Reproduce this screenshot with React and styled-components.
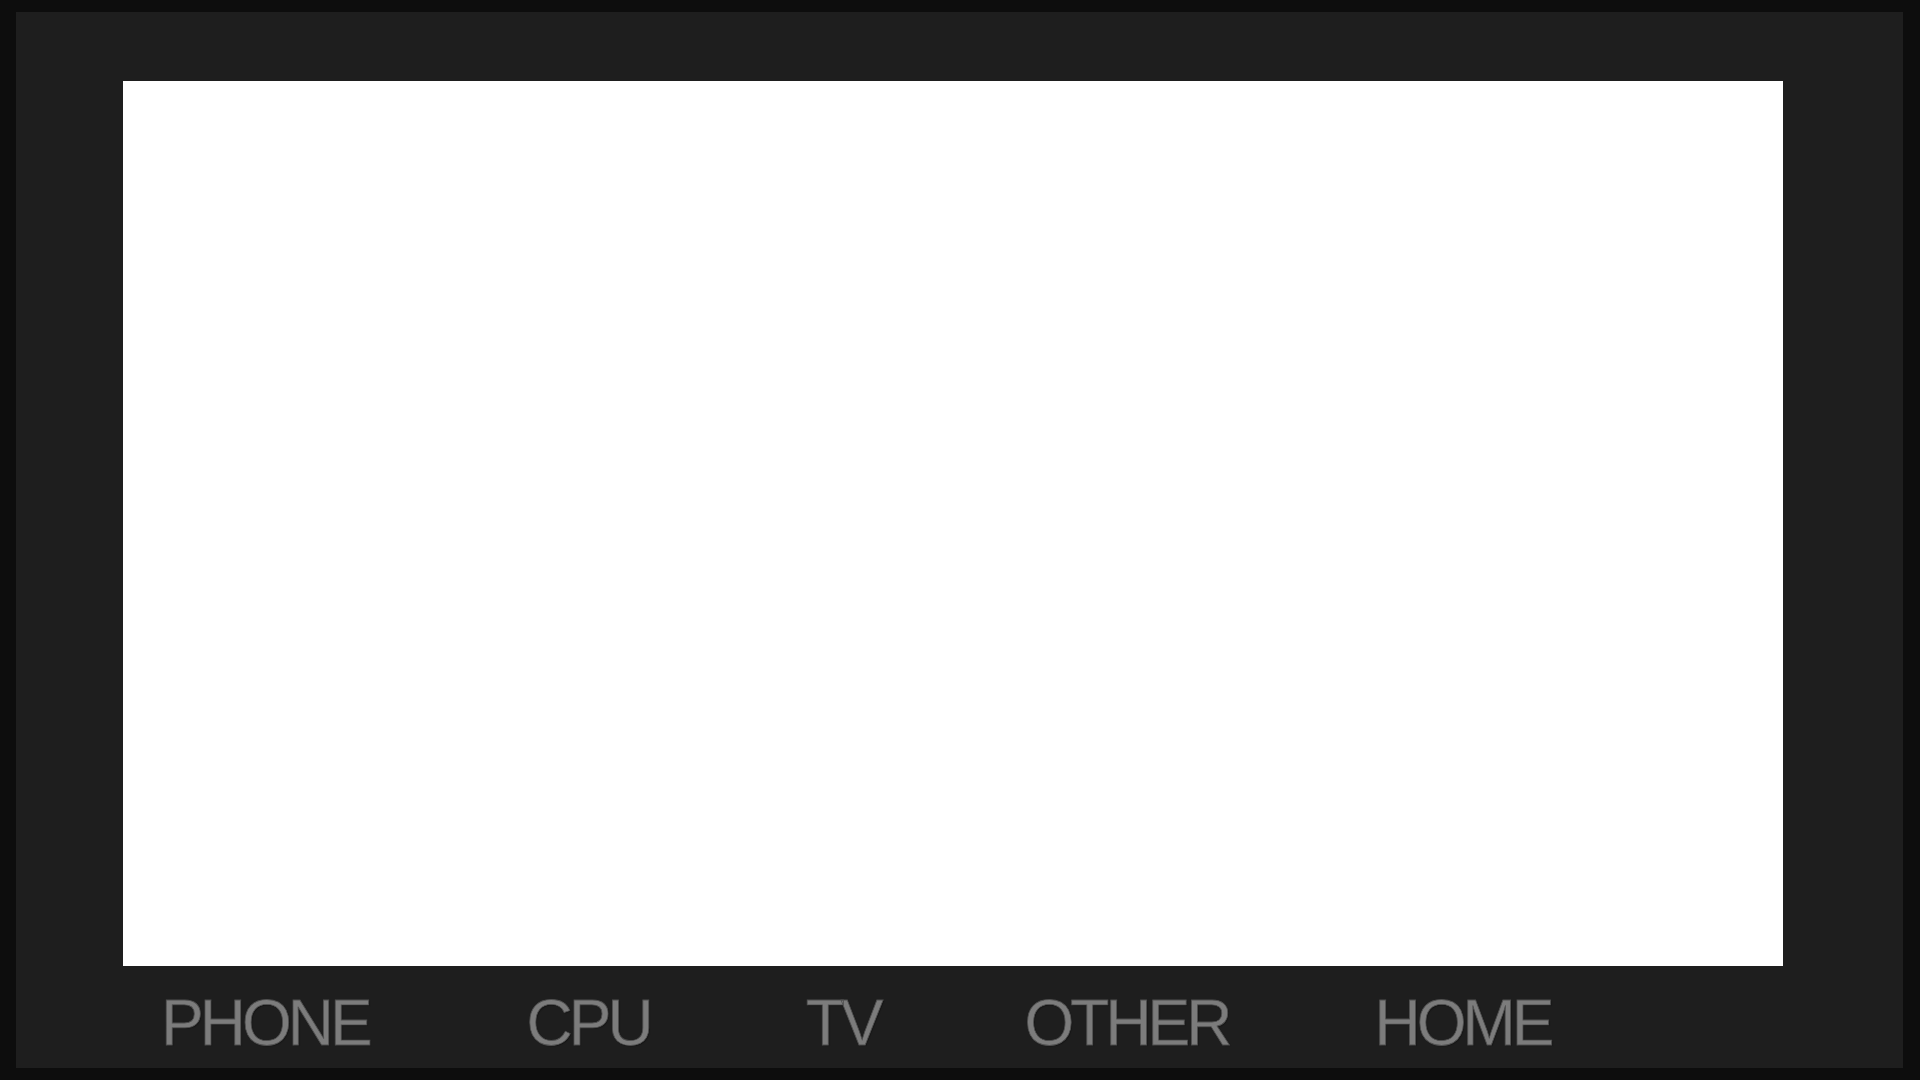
import React from "react";
import styled, { createGlobalStyle } from "styled-components";

const GlobalStyle = createGlobalStyle`
  html, body {
    margin: 0;
    padding: 0;
    background-color: #0d0d0d;
  }
  #root {
    height: 1080px;
  }
`;

const Frame = styled.div`
  box-sizing: border-box;
  height: 100%;
  padding: 12px 17px 12px 16px;
`;

const Panel = styled.div`
  box-sizing: border-box;
  height: 100%;
  display: flex;
  flex-direction: column;
  background-color: #1e1e1e;
  padding: 69px 120px 0 107px;
`;

const Screen = styled.div`
  width: 1660px;
  height: 885px;
  background-color: #ffffff;
`;

const Nav = styled.nav`
  display: flex;
  flex-direction: row;
  align-items: flex-start;
  margin-top: 20px;
  padding-left: 38px;
`;

const NavItem = styled.a`
  font-family: "Liberation Sans", Arial, sans-serif;
  font-size: 64px;
  line-height: normal;
  letter-spacing: -4px;
  color: #7c7c7c;
  -webkit-text-stroke: 0.8px #505050;
  text-shadow: 1px 1px 1px rgba(0, 0, 0, 0.35);
  text-decoration: none;
  cursor: pointer;
  margin-left: ${({ $gap }) => $gap}px;

  &:first-child {
    margin-left: 0;
  }
`;

const links = [
  { label: "PHONE", gap: 0 },
  { label: "CPU", gap: 158 },
  { label: "TV", gap: 156 },
  { label: "OTHER", gap: 145 },
  { label: "HOME", gap: 146 },
];

const App = () => (
  <>
    <GlobalStyle />
    <Frame>
      <Panel>
        <Screen />
        <Nav>
          {links.map((link) => (
            <NavItem key={link.label} $gap={link.gap}>
              {link.label}
            </NavItem>
          ))}
        </Nav>
      </Panel>
    </Frame>
  </>
);

export default App;
